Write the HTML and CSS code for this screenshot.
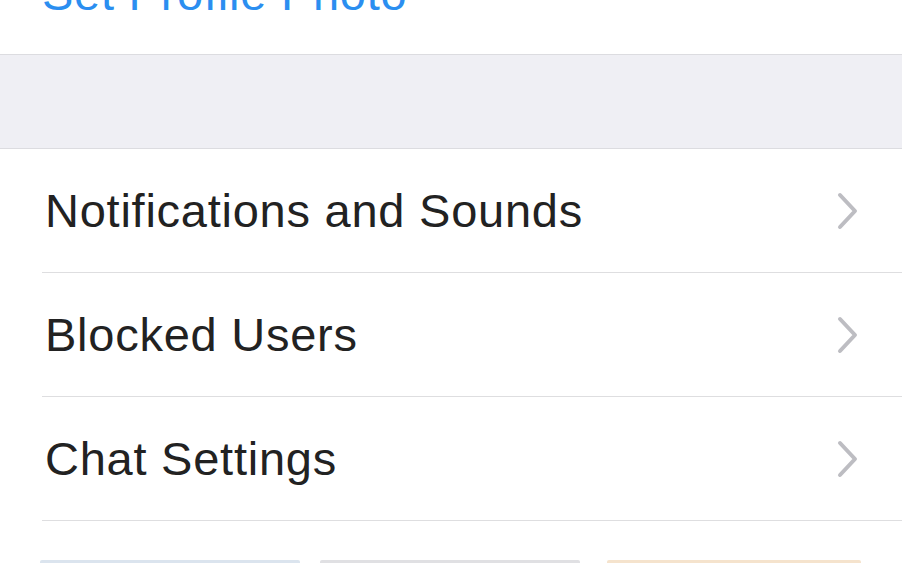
FILE: index.html
```html
<!DOCTYPE html>
<html lang="en">
<head>
    <meta charset="UTF-8">
    <meta name="viewport" content="width=device-width, initial-scale=1.0">
    <title>Settings</title>
    <link rel="stylesheet" href="styles.css">
</head>
<body>
    <div class="profile-cell">
        <span class="profile-link">Set Profile Photo</span>
    </div>

    <div class="group-gap"></div>

    <ul class="settings-list">
        <li class="settings-row">
            <span class="row-label">Notifications and Sounds</span>
            <svg class="chevron" width="24" height="40" viewBox="0 0 24 40"><polyline points="4,4 19,20 4,36" /></svg>
        </li>
        <li class="settings-row">
            <span class="row-label">Blocked Users</span>
            <svg class="chevron" width="24" height="40" viewBox="0 0 24 40"><polyline points="4,4 19,20 4,36" /></svg>
        </li>
        <li class="settings-row">
            <span class="row-label">Chat Settings</span>
            <svg class="chevron" width="24" height="40" viewBox="0 0 24 40"><polyline points="4,4 19,20 4,36" /></svg>
        </li>
    </ul>

    <div class="tiles">
        <div class="tile tile-blue"></div>
        <div class="tile tile-gray"></div>
        <div class="tile tile-orange"></div>
    </div>
</body>
</html>
```

FILE: styles.css
```css
body {
    margin: 0;
    font-family: 'Liberation Sans', Arial, sans-serif;
    background-color: #fff;
    color: #222;
    overflow: hidden;
}

.profile-cell {
    height: 54px;
    display: flex;
    flex-direction: column;
    justify-content: flex-end;
    padding: 0 0 37px 42px;
    box-sizing: border-box;
}

.profile-link {
    color: #2b8ef0;
    font-size: 47px;
    letter-spacing: 0.75px;
    line-height: 1;
}

.group-gap {
    height: 93px;
    background-color: #efeff4;
    border-top: 1px solid #dcdce0;
    border-bottom: 1px solid #dcdce0;
}

.settings-list {
    list-style: none;
    margin: 0;
    padding: 0 0 0 42px;
    background-color: #fff;
}

.settings-row {
    height: 124px;
    display: flex;
    align-items: center;
    justify-content: space-between;
    padding: 0 42px 0 3px;
    border-bottom: 1px solid #dedee0;
    box-sizing: border-box;
}

.row-label {
    font-size: 47px;
    letter-spacing: 0.75px;
    line-height: 1;
}

.chevron {
    display: block;
    fill: none;
    stroke: #bdbdc2;
    stroke-width: 4;
    stroke-linecap: round;
    stroke-linejoin: round;
}

.tiles {
    display: flex;
    gap: 20px;
    padding: 39px 0 0 40px;
}

.tile {
    width: 260px;
    height: 6px;
    border-radius: 2px 2px 0 0;
}

.tile-blue {
    background-color: #dbe4ee;
}

.tile-gray {
    background-color: #e0e0e3;
}

.tile-orange {
    width: 254px;
    margin-left: 7px;
    background-color: #f5e3cd;
}
```
